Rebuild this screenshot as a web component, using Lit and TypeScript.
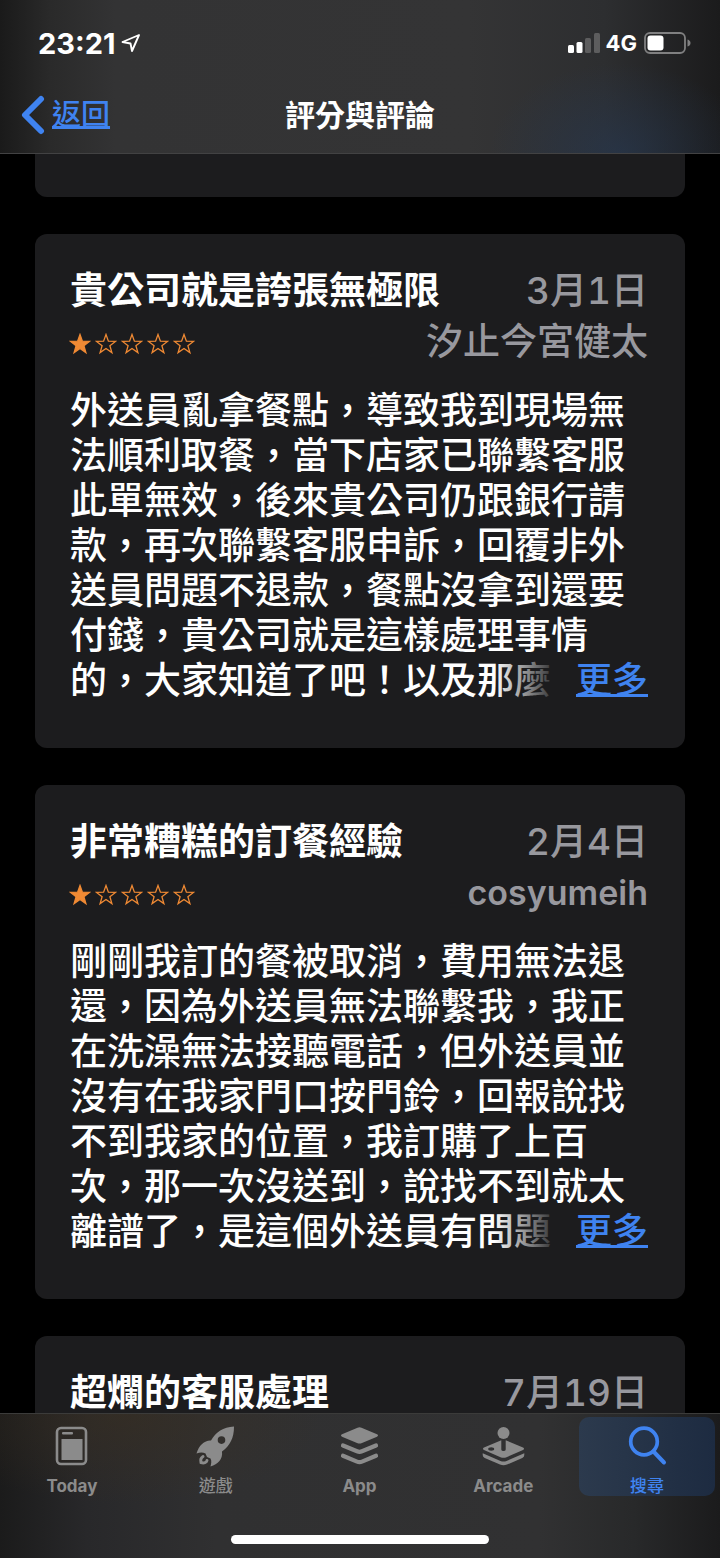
import { LitElement, html, css, svg } from "lit";
import { customElement, property } from "lit/decorators.js";

interface Review {
  title: string;
  date: string;
  author: string;
  stars: number;
  body: string;
}

const REVIEWS: Review[] = [
  {
    title: "貴公司就是誇張無極限",
    date: "3月1日",
    author: "汐止今宮健太",
    stars: 1,
    body: "外送員亂拿餐點，導致我到現場無法順利取餐，當下店家已聯繫客服此單無效，後來貴公司仍跟銀行請款，再次聯繫客服申訴，回覆非外送員問題不退款，餐點沒拿到還要付錢，貴公司就是這樣處理事情的，大家知道了吧！以及那麼",
  },
  {
    title: "非常糟糕的訂餐經驗",
    date: "2月4日",
    author: "cosyumeih",
    stars: 1,
    body: "剛剛我訂的餐被取消，費用無法退還，因為外送員無法聯繫我，我正在洗澡無法接聽電話，但外送員並沒有在我家門口按門鈴，回報說找不到我家的位置，我訂購了上百次，那一次沒送到，說找不到就太離譜了，是這個外送員有問題",
  },
  {
    title: "超爛的客服處理",
    date: "7月19日",
    author: "",
    stars: 1,
    body: "",
  },
];

const TABS = [
  {
    label: "Today",
    icon: svg`<rect x="6" y="2" width="29" height="36" rx="4" fill="none" stroke="currentColor" stroke-width="2.600"/>
      <rect x="11" y="6" width="11" height="2.4" rx="1" fill="currentColor"/>
      <rect x="10.500" y="13" width="21" height="21" fill="currentColor"/>`,
  },
  {
    label: "遊戲",
    icon: svg`<path fill="currentColor" fill-rule="evenodd" d="M39 .5C28 1 21 6 16 14.500C10 14 4 19 1.500 27.500C5 26 8 26 10.500 27.500L12 31L15.500 32.500C17 35 16 38 15.500 40.500C23 38 28 33 27 25.500C35 19.500 39 12 39 .5ZM26.500 10.300A3.800 3.800 0 1 1 26.500 17.900A3.800 3.800 0 1 1 26.500 10.300Z"/>
      <path fill="none" stroke="currentColor" stroke-width="3" stroke-linecap="round" d="M8 30.500C5.500 32 5.500 34.500 6 36.500C9 37.500 11.500 36.500 12 34.500"/>`,
  },
  {
    label: "App",
    icon: svg`<path fill="currentColor" d="M18.500 1.700Q20.500 .8 22.500 1.700L38 8.300Q40 9.500 38 10.700L23 17Q20.500 18 18 17L3 10.700Q1 9.500 3 8.300Z"/>
      <path fill="none" stroke="currentColor" stroke-width="4.200" stroke-linecap="round" stroke-linejoin="round" d="M4 19.500L18 25.300Q20.500 26.300 23 25.300L37 19.500M4 29.800L18 35.600Q20.500 36.600 23 35.600L37 29.800"/>`,
  },
  {
    label: "Arcade",
    icon: svg`<circle cx="20.500" cy="7" r="6" fill="currentColor"/>
      <path fill="currentColor" fill-rule="evenodd" d="M18.300 14.200L1 21.500Q-1 22.700 1 24L17.500 31.200Q20.500 32.400 23.500 31.200L40 24Q42 22.700 40 21.500L22.700 14.200V23.500Q22.700 25 20.500 25T18.300 23.500ZM8.200 21.300Q11.200 21.300 11.200 23T8.200 24.700T5.200 23T8.200 21.300Z"/>
      <path fill="currentColor" d="M-.3 27.300L17.500 35Q20.500 36.200 23.500 35L41.300 27.300V29Q41.300 31 39.300 32L24 38.600Q20.500 40 17 38.600L1.700 32Q-.3 31 -.3 29Z"/>`,
  },
  {
    label: "搜尋",
    active: true,
    icon: svg`<circle cx="17" cy="15.500" r="13.300" fill="none" stroke="currentColor" stroke-width="3.700"/>
      <path d="M26.500 25.500L37 36.500" fill="none" stroke="currentColor" stroke-width="4" stroke-linecap="round"/>`,
  },
];

const STAR = "M11 1.500L13.400 8.200L20.500 8.400L14.900 12.700L16.900 19.600L11 15.500L5.100 19.600L7.100 12.700L1.500 8.400L8.600 8.200Z";

@customElement("review-card")
class ReviewCard extends LitElement {
  @property({ attribute: false }) review!: Review;

  static styles = css`
    :host {
      display: block;
      flex: none;
    }
    .card {
      background: #1c1c1e;
      border-radius: 12px;
      padding: 31px 37px 45px 35px;
      font-size: 37px;
      font-weight: 500;
      color: #fff;
    }
    .row {
      display: flex;
      justify-content: space-between;
      align-items: center;
      height: 51px;
      line-height: 51px;
      white-space: nowrap;
    }
    .title {
      margin: 0;
      font-size: 37px;
      font-weight: 700;
    }
    .meta {
      color: #98989e;
      font-variant-numeric: tabular-nums;
    }
    .author {
      color: #98989e;
    }
    .author:lang(en) {
      font-size: 34px;
      font-weight: 600;
    }
    .stars {
      display: flex;
      gap: 4px;
      margin-left: -1px;
      padding-top: 4px;
      color: #f08a34;
    }
    .stars svg {
      width: 22px;
      height: 22px;
    }
    .text {
      position: relative;
      height: 315px;
      margin-top: 21px;
      overflow: hidden;
    }
    .body {
      margin: 0;
      line-height: 45px;
    }
    .more {
      position: absolute;
      right: 0;
      bottom: 0;
      padding-left: 82px;
      line-height: 45px;
      font-size: 36px;
      color: #3f83f0;
      background: linear-gradient(90deg, #1c1c1e00, #1c1c1e 66px);
      text-decoration: none;
    }
    .more span {
      text-decoration: underline 3px;
      text-underline-offset: 1px;
      text-decoration-skip-ink: none;
    }
  `;

  render() {
    const r = this.review;
    return html`<article class="card">
      <div class="row">
        <h2 class="title">${r.title}</h2>
        <span class="meta">${r.date}</span>
      </div>
      <div class="row">
        <span class="stars" role="img" aria-label="${r.stars} / 5">
          ${[0, 1, 2, 3, 4].map(
            (i) => html`<svg viewBox="0 0 22 22">
              <path d=${STAR} fill=${i < r.stars ? "currentColor" : "none"} stroke="currentColor" stroke-width="1.300" />
            </svg>`
          )}
        </span>
        <span class="author" lang=${/^[a-z]/.test(r.author) ? "en" : "zh-Hant"}>${r.author}</span>
      </div>
      <div class="text">
        <p class="body">${r.body}</p>
        ${r.body ? html`<a class="more" href="#more"><span>更多</span></a>` : ""}
      </div>
    </article>`;
  }
}

@customElement("app-root")
class AppRoot extends LitElement {
  static styles = css`
    :host {
      display: flex;
      flex-direction: column;
      height: 100vh;
      overflow: hidden;
      background: #000;
      color: #fff;
      font-family: Inter, "Noto Sans CJK TC", sans-serif;
    }
    .top {
      flex: none;
      box-sizing: border-box;
      height: 154px;
      border-bottom: 1px solid #424243;
      background:
        radial-gradient(130px 90px at 86% 100%, #253a5888, #253a5800),
        linear-gradient(90deg, #1a1a1a, #2a2a2a 7%, #333334 16%, #343435 65%, #2d2e30 84%, #1b1b1c);
    }
    .status {
      display: flex;
      align-items: center;
      height: 86px;
      padding: 0 29px 0 38px;
    }
    .time {
      font-size: 29px;
      font-weight: 700;
    }
    .arrow {
      width: 20px;
      height: 20px;
      margin-left: 6px;
    }
    .signal {
      width: 34px;
      height: 22px;
      margin-left: auto;
    }
    .net {
      margin: 0 7px 0 5px;
      font-size: 22px;
      font-weight: 700;
    }
    .battery {
      width: 47px;
      height: 22px;
    }
    .nav {
      display: grid;
      grid-template-columns: 1fr auto 1fr;
      align-items: center;
      height: 58px;
      padding: 0 21px;
      line-height: 40px;
    }
    .back {
      display: flex;
      align-items: center;
      gap: 7px;
      font-size: 29px;
      font-weight: 500;
      color: #3f83f0;
      text-decoration: none;
    }
    .back svg {
      width: 24px;
      height: 40px;
    }
    .back span {
      text-decoration: underline 3px;
      text-underline-offset: 1px;
      text-decoration-skip-ink: none;
    }
    .heading {
      margin: 0;
      font-size: 30px;
      font-weight: 700;
    }
    .list {
      flex: 1;
      min-height: 0;
      overflow: hidden;
      display: flex;
      flex-direction: column;
      gap: 37px;
      padding: 0 35px;
    }
    .previous {
      flex: none;
      height: 43px;
      background: #1c1c1e;
      border-radius: 0 0 12px 12px;
    }
    .bottom {
      flex: none;
      box-sizing: border-box;
      height: 145px;
      border-top: 1px solid #3b3b3a;
      background:
        radial-gradient(200px 90px at 17% 0, #3b2f1f88, #3b2f1f00),
        linear-gradient(90deg, #1b1b1b, #28282a 12%, #303031 30%, #313132 75%, #28292a 88%, #1b1b1c);
    }
    .tabs {
      display: grid;
      grid-template-columns: repeat(5, 1fr);
      padding-right: 1px;
    }
    .tab {
      display: flex;
      flex-direction: column;
      align-items: center;
      box-sizing: border-box;
      height: 79px;
      margin: 3px 4px 0;
      padding-top: 9px;
      border-radius: 10px;
      color: #8b8b8b;
      font-size: 17px;
      font-weight: 700;
      line-height: 22px;
      text-decoration: none;
    }
    .tab svg {
      width: 41px;
      height: 41px;
      overflow: visible;
    }
    .tab span {
      margin-top: 8px;
    }
    .tab:lang(zh) {
      font-weight: 500;
    }
    .active {
      color: #3f83f0;
      background: linear-gradient(90deg, #2c3a4d, #1d2b41);
    }
    .home {
      width: 258px;
      height: 9px;
      margin: 39px auto 0;
      border-radius: 5px;
      background: #fff;
    }
  `;

  render() {
    return html`
      <header class="top">
        <div class="status">
          <span class="time">23:21</span>
          <svg class="arrow" viewBox="0 0 20 20"><path d="M18 2L1.500 9L9.500 10.500L11 18Z" fill="none" stroke="#fff" stroke-width="1.900" stroke-linejoin="round" /></svg>
          <svg class="signal" viewBox="0 0 34 22">
            <rect x="1" y="13" width="6" height="8" rx="1.500" fill="#fff" />
            <rect x="9.500" y="10" width="6" height="11" rx="1.500" fill="#fff" />
            <rect x="18" y="6" width="6" height="15" rx="1.500" fill="#5d5d5e" />
            <rect x="27" y="1" width="6" height="20" rx="1.500" fill="#5d5d5e" />
          </svg>
          <span class="net">4G</span>
          <svg class="battery" viewBox="0 0 47 22">
            <rect x="1" y="1" width="40" height="20" rx="5" fill="none" stroke="#808081" stroke-width="1.800" />
            <rect x="3.500" y="3.500" width="16" height="15" rx="3" fill="#fff" />
            <path d="M43.500 7.500Q46.500 8.500 46.500 11T43.500 14.500Z" fill="#808081" />
          </svg>
        </div>
        <div class="nav">
          <a class="back" href="#back">
            <svg viewBox="0 0 24 40"><path d="M20 4L4 20L20 36" fill="none" stroke="currentColor" stroke-width="6" stroke-linecap="round" stroke-linejoin="round" /></svg>
            <span>返回</span>
          </a>
          <h1 class="heading">評分與評論</h1>
        </div>
      </header>
      <main class="list">
        <div class="previous"></div>
        ${REVIEWS.map((r) => html`<review-card .review=${r}></review-card>`)}
      </main>
      <footer class="bottom">
        <nav class="tabs">
          ${TABS.map(
            (t) => html`<a class=${t.active ? "tab active" : "tab"} href="#tab" lang=${/^[A-Z]/.test(t.label) ? "en" : "zh-Hant"}>
              <svg viewBox="0 0 41 41">${t.icon}</svg>
              <span>${t.label}</span>
            </a>`
          )}
        </nav>
        <div class="home"></div>
      </footer>
    `;
  }
}
